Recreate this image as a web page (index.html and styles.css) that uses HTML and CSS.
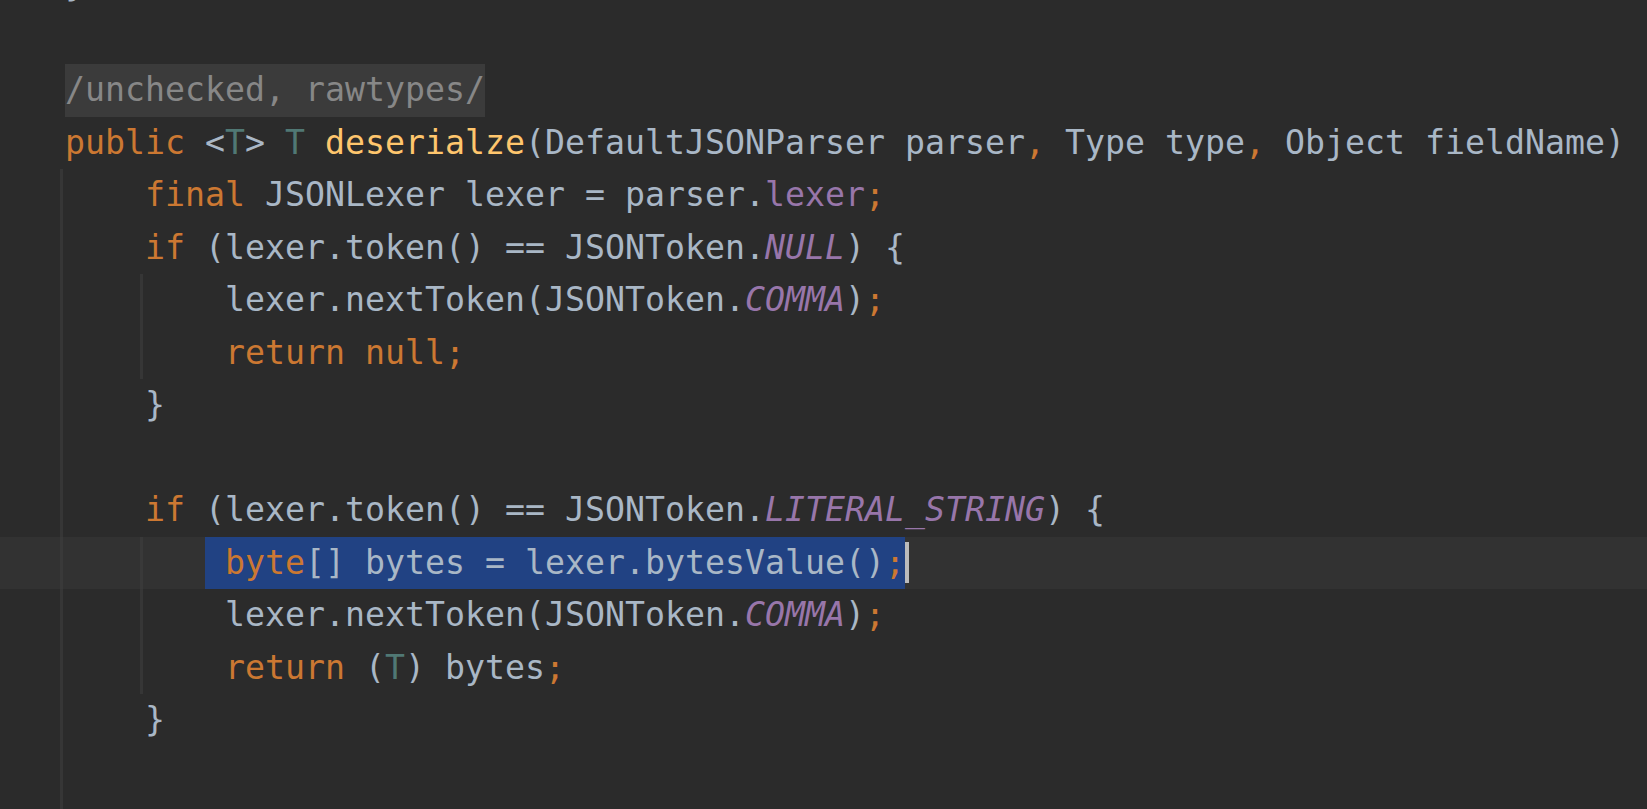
FILE: index.html
```html
<!DOCTYPE html>
<html lang="en">
<head>
<meta charset="utf-8">
<title>Editor</title>
<link rel="stylesheet" href="styles.css">
</head>
<body>
<div class="editor">
  <div class="line"><span class="p">}</span></div>
  <div class="line"></div>
  <div class="line"><span class="fold">/unchecked, rawtypes/</span></div>
  <div class="line"><span class="kw">public</span> &lt;<span class="tp">T</span>&gt; <span class="tp">T</span> <span class="fn">deserialze</span>(DefaultJSONParser parser<span class="kw">,</span> Type type<span class="kw">,</span> Object fieldName)</div>
  <div class="line g1">    <span class="kw">final</span> JSONLexer lexer = parser.<span class="fld">lexer</span><span class="kw">;</span></div>
  <div class="line g1">    <span class="kw">if</span> (lexer.token() == JSONToken.<span class="st">NULL</span>) {</div>
  <div class="line g1 g2">        lexer.nextToken(JSONToken.<span class="st">COMMA</span>)<span class="kw">;</span></div>
  <div class="line g1 g2">        <span class="kw">return null;</span></div>
  <div class="line g1">    }</div>
  <div class="line g1"></div>
  <div class="line g1">    <span class="kw">if</span> (lexer.token() == JSONToken.<span class="st">LITERAL_STRING</span>) {</div>
  <div class="line g1 g2 current">       <span class="sel"> <span class="kw">byte</span>[] bytes = lexer.bytesValue()<span class="kw">;</span></span><span class="caret"></span></div>
  <div class="line g1 g2">        lexer.nextToken(JSONToken.<span class="st">COMMA</span>)<span class="kw">;</span></div>
  <div class="line g1 g2">        <span class="kw">return</span> (<span class="tp">T</span>) bytes<span class="kw">;</span></div>
  <div class="line g1">    }</div>
  <div class="line g1"></div>
  <div class="line g1"></div>
</div>
</body>
</html>
```

FILE: styles.css
```css
html, body {
  margin: 0;
  padding: 0;
  background: #2b2b2b;
  overflow: hidden;
  height: 100%;
}

.editor {
  margin-top: -41px;
  font-family: "DejaVu Sans Mono", "Liberation Mono", monospace;
  font-size: 33.22px;
  color: #a9b7c6;
}

.line {
  height: 52.5px;
  line-height: 52.5px;
  padding-left: 65px;
  white-space: pre;
  background-repeat: no-repeat;
}

.line.g1 {
  background-image: linear-gradient(#363636, #363636);
  background-size: 3px 100%;
  background-position: 60px 0;
}

.line.g1.g2 {
  background-image: linear-gradient(#363636, #363636), linear-gradient(#363636, #363636);
  background-size: 3px 100%, 3px 100%;
  background-position: 60px 0, 140px 0;
}

.line.current {
  background-color: #323232;
}

.line.current.g1.g2 {
  background-image: linear-gradient(#393939, #393939), linear-gradient(#393939, #393939);
}

.kw { color: #cc7832; }
.tp { color: #507874; }
.fn { color: #ffc66d; }
.fld { color: #9876aa; }
.st { color: #9876aa; font-style: italic; }
.p { color: #a9b7c6; }

.fold {
  display: inline-block;
  vertical-align: top;
  height: 52.5px;
  background: #3b3b3b;
  color: #878787;
}

.sel {
  display: inline-block;
  vertical-align: top;
  height: 52.5px;
  background: #214283;
}

.caret {
  display: inline-block;
  vertical-align: top;
  width: 4px;
  height: 41px;
  margin-top: 5.5px;
  background: #bbbbbb;
}
```
